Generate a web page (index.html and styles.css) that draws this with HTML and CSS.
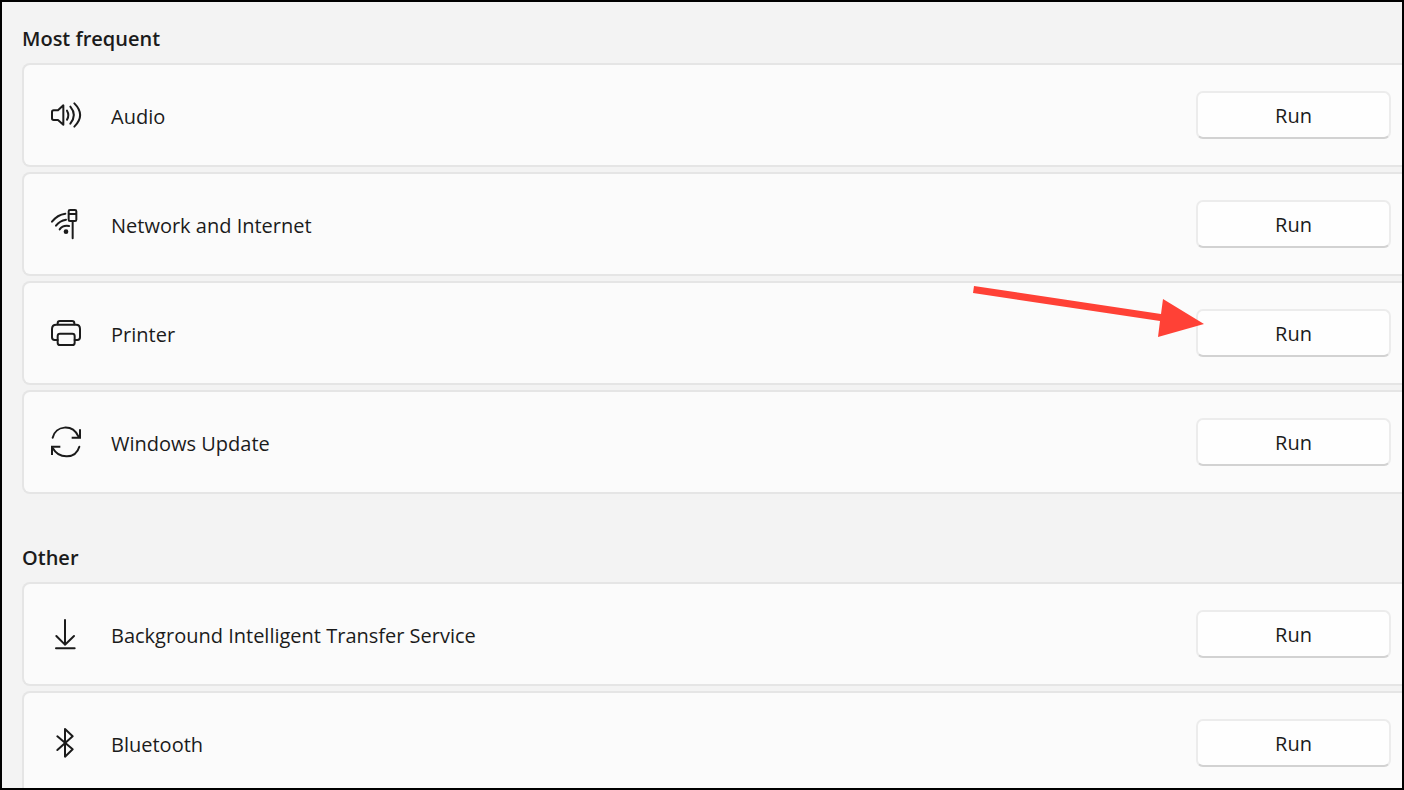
FILE: index.html
```html
<!DOCTYPE html>
<html lang="en">
<head>
<meta charset="UTF-8">
<meta name="viewport" content="width=device-width, initial-scale=1.0">
<title>Other troubleshooters</title>
<link rel="stylesheet" href="styles.css">
</head>
<body>
  <main class="page">

    <section class="group">
      <h2>Most frequent</h2>
      <ul class="list">
        <li class="card">
          <svg class="icon" viewBox="0 0 150 150" aria-hidden="true">
            <path d="M70 46v58L54 90H41q-5 0-5-5V66q0-5 5-5h13z"/>
            <path d="M81 62q8 13 0 27M91 50q21 25 0 51M103 40q35 35 0 70"/>
          </svg>
          <span class="name" id="audio">Audio</span>
          <button type="button" class="run" aria-describedby="audio">Run</button>
        </li>
        <li class="card">
          <svg class="icon" viewBox="0 0 150 150" aria-hidden="true">
            <path d="M36 68q16-21 40-24M48 80q11-15 30-18M59 91q9-13 28-10"/>
            <circle class="fill" cx="78" cy="98" r="7"/>
            <rect x="86" y="33" width="23" height="33" rx="4"/>
            <path d="M87 45h21M98 67v51"/>
          </svg>
          <span class="name" id="network">Network and Internet</span>
          <button type="button" class="run" aria-describedby="network">Run</button>
        </li>
        <li class="card">
          <svg class="icon" viewBox="0 0 150 150" aria-hidden="true">
            <path d="M53 49v-3q0-7 7-7h36q7 0 7 7v3"/>
            <path d="M53 96h-9q-8 0-8-8V63q0-13 13-13h59q12 0 12 13v25q0 8-8 8h-8"/>
            <rect x="53" y="77" width="51" height="34" rx="7"/>
          </svg>
          <span class="name" id="printer">Printer</span>
          <button type="button" class="run" aria-describedby="printer">Run</button>
          <!-- pointer to the Run button -->
          <svg class="arrow" viewBox="0 0 231 52" aria-hidden="true">
            <path d="M1 0L188 28L190 13L231 38L185 51L187 35L0 7z"/>
          </svg>
        </li>
        <li class="card">
          <svg class="icon" viewBox="0 0 150 150" aria-hidden="true">
            <path d="M38 62C47 25 97 20 115 58M118 89C107 126 58 128 38 93"/>
            <path class="square" d="M120 37v25H95M61 89H36v25"/>
          </svg>
          <span class="name" id="update">Windows Update</span>
          <button type="button" class="run" aria-describedby="update">Run</button>
        </li>
      </ul>
    </section>

    <section class="group">
      <h2>Other</h2>
      <ul class="list">
        <li class="card">
          <svg class="icon" viewBox="0 0 150 150" aria-hidden="true">
            <path d="M75 33v74M49 81l26 26 27-26M48 118h56"/>
          </svg>
          <span class="name" id="bits">Background Intelligent Transfer Service</span>
          <button type="button" class="run" aria-describedby="bits">Run</button>
        </li>
        <li class="card">
          <svg class="icon" viewBox="0 0 150 150" aria-hidden="true">
            <path d="M52 55l46 39-23 22V33l23 22-46 41"/>
          </svg>
          <span class="name" id="bluetooth">Bluetooth</span>
          <button type="button" class="run" aria-describedby="bluetooth">Run</button>
        </li>
      </ul>
    </section>

  </main>
</body>
</html>
```
FILE: styles.css
```css
* {
  box-sizing: border-box;
}

body {
  margin: 0;
  font-family: "Segoe UI", "Open Sans", "Noto Sans", sans-serif;
  font-size: 20px;
  line-height: 30px;
  color: #1b1b1b;
}

.page {
  height: 100vh;
  overflow: hidden;
  padding: 22px 0 0 20px;
  border: 2px solid #000;
  background: #f3f3f3;
}

.group {
  margin-bottom: 49px;
}

h2 {
  margin: 0 0 9px;
  font-size: 20px;
  font-weight: 600;
}

.list {
  display: flex;
  flex-direction: column;
  gap: 5px;
  margin: 0;
  padding: 0;
  list-style: none;
}

/* cards run off the right edge, so no border there */
.card {
  position: relative;
  display: flex;
  align-items: center;
  height: 104px;
  padding: 0 11px 0 16px;
  border: 2px solid #e5e5e5;
  border-right: 0;
  border-radius: 8px 0 0 8px;
  background: #fbfbfb;
}

.icon {
  flex: none;
  width: 50px;
  height: 50px;
  margin-right: 21px;
  fill: none;
  stroke: #1b1b1b;
  stroke-width: 6;
  stroke-linecap: round;
  stroke-linejoin: round;
}

.icon .fill {
  fill: #1b1b1b;
  stroke: none;
}

.icon .square {
  stroke-linecap: butt;
  stroke-linejoin: miter;
}

.name {
  flex: 1;
  padding-top: 4px;
}

.run {
  width: 195px;
  height: 48px;
  padding: 2px 0 0;
  border: 2px solid #ececec;
  border-bottom-color: #d2d2d2;
  border-radius: 7px;
  background: #fefefe;
  color: inherit;
  font: inherit;
}

.arrow {
  position: absolute;
  top: 3px;
  right: 198px;
  width: 231px;
  height: 52px;
  fill: #ff4136;
}
```
